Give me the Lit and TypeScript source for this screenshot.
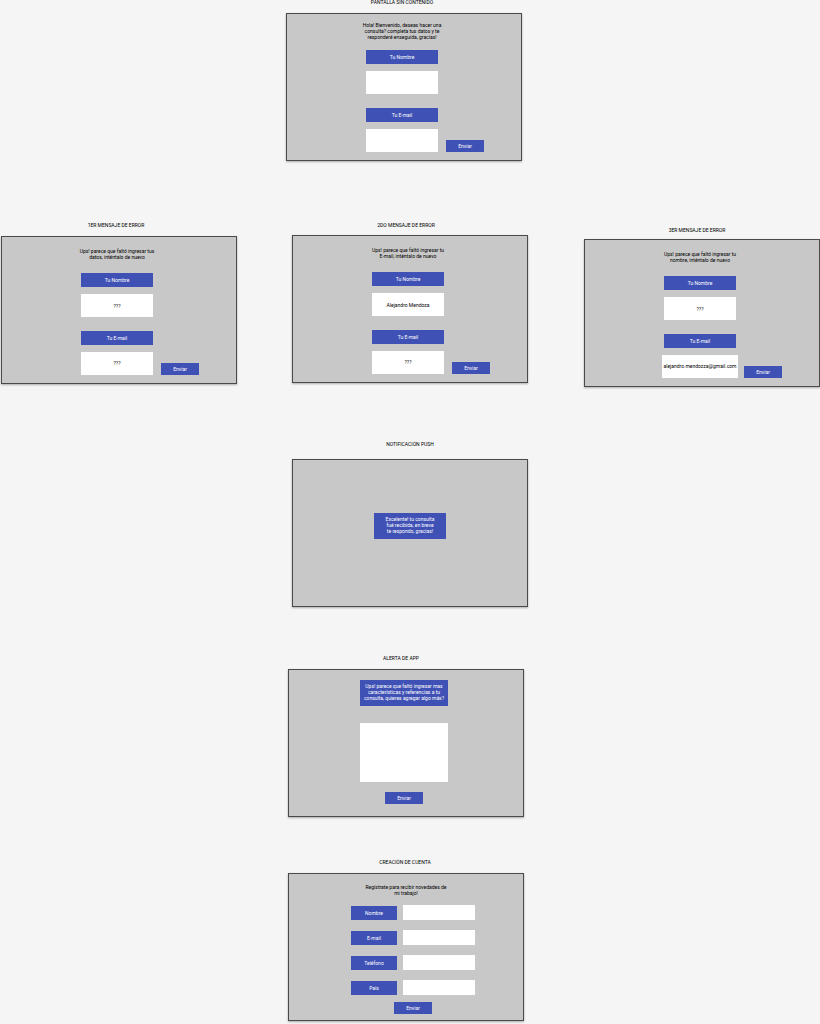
import { LitElement, html, css, TemplateResult } from "lit";
import { customElement, property } from "lit/decorators.js";

const shared = css`
  * {
    box-sizing: border-box;
  }
  .tag {
    display: flex;
    align-items: center;
    justify-content: center;
    height: 14px;
    background: #3f51b5;
    color: #fff;
  }
  .field {
    display: block;
    width: 100%;
    margin: 0;
    padding: 0;
    border: 0;
    border-radius: 0;
    outline: 0;
    resize: none;
    background: #fff;
    color: #000;
    font: inherit;
    text-align: center;
  }
  .send {
    width: 38px;
    height: 12px;
    margin: 0;
    padding: 0;
    border: 0;
    background: #3f51b5;
    color: #fff;
    font: inherit;
    cursor: pointer;
  }
  .message,
  .notice {
    margin: 0;
    text-align: center;
    white-space: pre;
  }
  .notice {
    height: 26px;
    padding-top: 3px;
    background: #3f51b5;
    color: #fff;
  }
`;

@customElement("contact-form")
class ContactForm extends LitElement {
  @property() message = "";
  @property() name = "";
  @property() email = "";

  static styles = [
    shared,
    css`
      :host {
        display: block;
      }
      .form {
        display: grid;
        grid-template-columns: 72px 38px;
        column-gap: 8px;
        margin: 0;
        padding-left: 79px;
      }
      .message {
        grid-column: 1;
        justify-self: center;
        display: flex;
        align-items: center;
        height: 36px;
        padding-bottom: 3px;
      }
      .tag,
      .field {
        grid-column: 1;
      }
      .field {
        height: 23px;
        margin-top: 7px;
      }
      .field.name {
        margin-bottom: 14px;
      }
      .field.email {
        width: 76px;
        justify-self: center;
        padding-bottom: 2px;
      }
      .field.email.short {
        width: 72px;
      }
      .send {
        grid-column: 2;
        align-self: end;
      }
    `,
  ];

  render() {
    const size = this.email.length > 20 ? "" : "short";
    return html`
      <form class="form" @submit=${(e: Event) => e.preventDefault()}>
        <p class="message">${this.message}</p>
        <label class="tag" for="name">Tu Nombre</label>
        <input class="field name" id="name" type="text" .value=${this.name} />
        <label class="tag" for="email">Tu E-mail</label>
        <input class="field email ${size}" id="email" type="text" .value=${this.email} />
        <button class="send">Enviar</button>
      </form>
    `;
  }
}

@customElement("push-notice")
class PushNotice extends LitElement {
  static styles = [
    shared,
    css`
      :host {
        display: flex;
        justify-content: center;
        padding-top: 53px;
      }
      .notice {
        width: 72px;
      }
    `,
  ];

  render() {
    return html`<p class="notice" role="status">${"Excelente! tu consulta\nfué recibida, en breve\nte respondo, gracias!"}</p>`;
  }
}

@customElement("detail-alert")
class DetailAlert extends LitElement {
  static styles = [
    shared,
    css`
      :host {
        display: block;
        padding: 10px 0 0 71px;
      }
      .form {
        display: flex;
        flex-direction: column;
        align-items: center;
        width: 88px;
      }
      .notice {
        display: block;
        width: 100%;
      }
      .field {
        height: 59px;
        margin: 17px 0 10px;
      }
    `,
  ];

  render() {
    return html`
      <form class="form" @submit=${(e: Event) => e.preventDefault()}>
        <label class="notice" for="detail"
          >${"Ups! parece que faltó ingresar mas\ncaracterísticas y referencias a tu\nconsulta, quieres agregar algo más?"}</label
        >
        <textarea class="field" id="detail"></textarea>
        <button class="send">Enviar</button>
      </form>
    `;
  }
}

@customElement("signup-form")
class SignupForm extends LitElement {
  static styles = [
    shared,
    css`
      :host {
        display: block;
        padding-top: 10px;
      }
      .form {
        display: grid;
        grid-template-columns: 46px 72px;
        gap: 10px 6px;
        padding: 9px 0 0 62px;
      }
      .tag {
        align-self: end;
      }
      .field {
        height: 15px;
      }
      .send {
        grid-column: 1 / -1;
        justify-self: center;
        margin-top: -3px;
      }
    `,
  ];

  render() {
    const fields = [
      ["nombre", "Nombre"],
      ["email", "E-mail"],
      ["telefono", "Teléfono"],
      ["pais", "País"],
    ];
    return html`
      <p class="message">${"Regístrate para recibir novedades de\nmi trabajo!"}</p>
      <form class="form" @submit=${(e: Event) => e.preventDefault()}>
        ${fields.map(
          ([id, label]) => html`
            <label class="tag" for=${id}>${label}</label>
            <input class="field" id=${id} type="text" />
          `
        )}
        <button class="send">Enviar</button>
      </form>
    `;
  }
}

interface Frame {
  title: string;
  // Centre of the caption and of the frame, measured from the board's middle.
  titleX: number;
  titleY: number;
  x: number;
  y: number;
  body: TemplateResult;
}

const frames: Frame[] = [
  {
    title: "PANTALLA SIN CONTENIDO",
    titleX: -8, titleY: -1, x: -6, y: 13,
    body: html`<contact-form
      .message=${"Hola! Bienvenido, deseas hacer una\nconsulta? completa tus datos y te\nresponderé enseguida, gracias!"}
    ></contact-form>`,
  },
  {
    title: "1ER MENSAJE DE ERROR",
    titleX: -294, titleY: 222, x: -291, y: 236,
    body: html`<contact-form
      .message=${"Ups! parece que faltó ingresar tus\ndatos, inténtalo de nuevo"}
      .name=${"???"}
      .email=${"???"}
    ></contact-form>`,
  },
  {
    title: "2DO MENSAJE DE ERROR",
    titleX: -4, titleY: 222, x: 0, y: 235,
    body: html`<contact-form
      .message=${"Ups! parece que faltó ingresar tu\nE-mail, inténtalo de nuevo"}
      .name=${"Alejandro Mendoza"}
      .email=${"???"}
    ></contact-form>`,
  },
  {
    title: "3ER MENSAJE DE ERROR",
    titleX: 287, titleY: 227, x: 292, y: 239,
    body: html`<contact-form
      .message=${"Ups! parece que faltó ingresar tu\nnombre, inténtalo de nuevo"}
      .name=${"???"}
      .email=${"alejandro.mendozza@gmail.com"}
    ></contact-form>`,
  },
  {
    title: "NOTIFICACIÓN PUSH",
    titleX: 0, titleY: 441, x: 0, y: 459,
    body: html`<push-notice></push-notice>`,
  },
  {
    title: "ALERTA DE APP",
    titleX: -9, titleY: 655, x: -4, y: 669,
    body: html`<detail-alert></detail-alert>`,
  },
  {
    title: "CREACIÓN DE CUENTA",
    titleX: -5, titleY: 859, x: -4, y: 873,
    body: html`<signup-form></signup-form>`,
  },
];

@customElement("app-root")
class AppRoot extends LitElement {
  static styles = css`
    :host {
      display: block;
      background: #f5f5f5;
      color: #000;
      font: 5px/6px Roboto, "Liberation Sans", sans-serif;
    }
    .board {
      position: relative;
      min-height: 100vh;
      overflow: hidden;
    }
    .title,
    .frame {
      position: absolute;
      transform: translateX(-50%);
    }
    .title {
      margin: 0;
      font: inherit;
      white-space: nowrap;
    }
    .frame {
      box-sizing: border-box;
      width: 236px;
      height: 148px;
      border: 1px solid #4a4a4a;
      background: #c8c8c8;
      box-shadow: 0 1px 2px rgba(0, 0, 0, 0.3);
    }
  `;

  render() {
    return html`
      <main class="board">
        ${frames.map(
          (f) => html`
            <h2 class="title" style="left: calc(50% + ${f.titleX}px); top: ${f.titleY}px">${f.title}</h2>
            <section class="frame" aria-label=${f.title} style="left: calc(50% + ${f.x}px); top: ${f.y}px">
              ${f.body}
            </section>
          `
        )}
      </main>
    `;
  }
}
